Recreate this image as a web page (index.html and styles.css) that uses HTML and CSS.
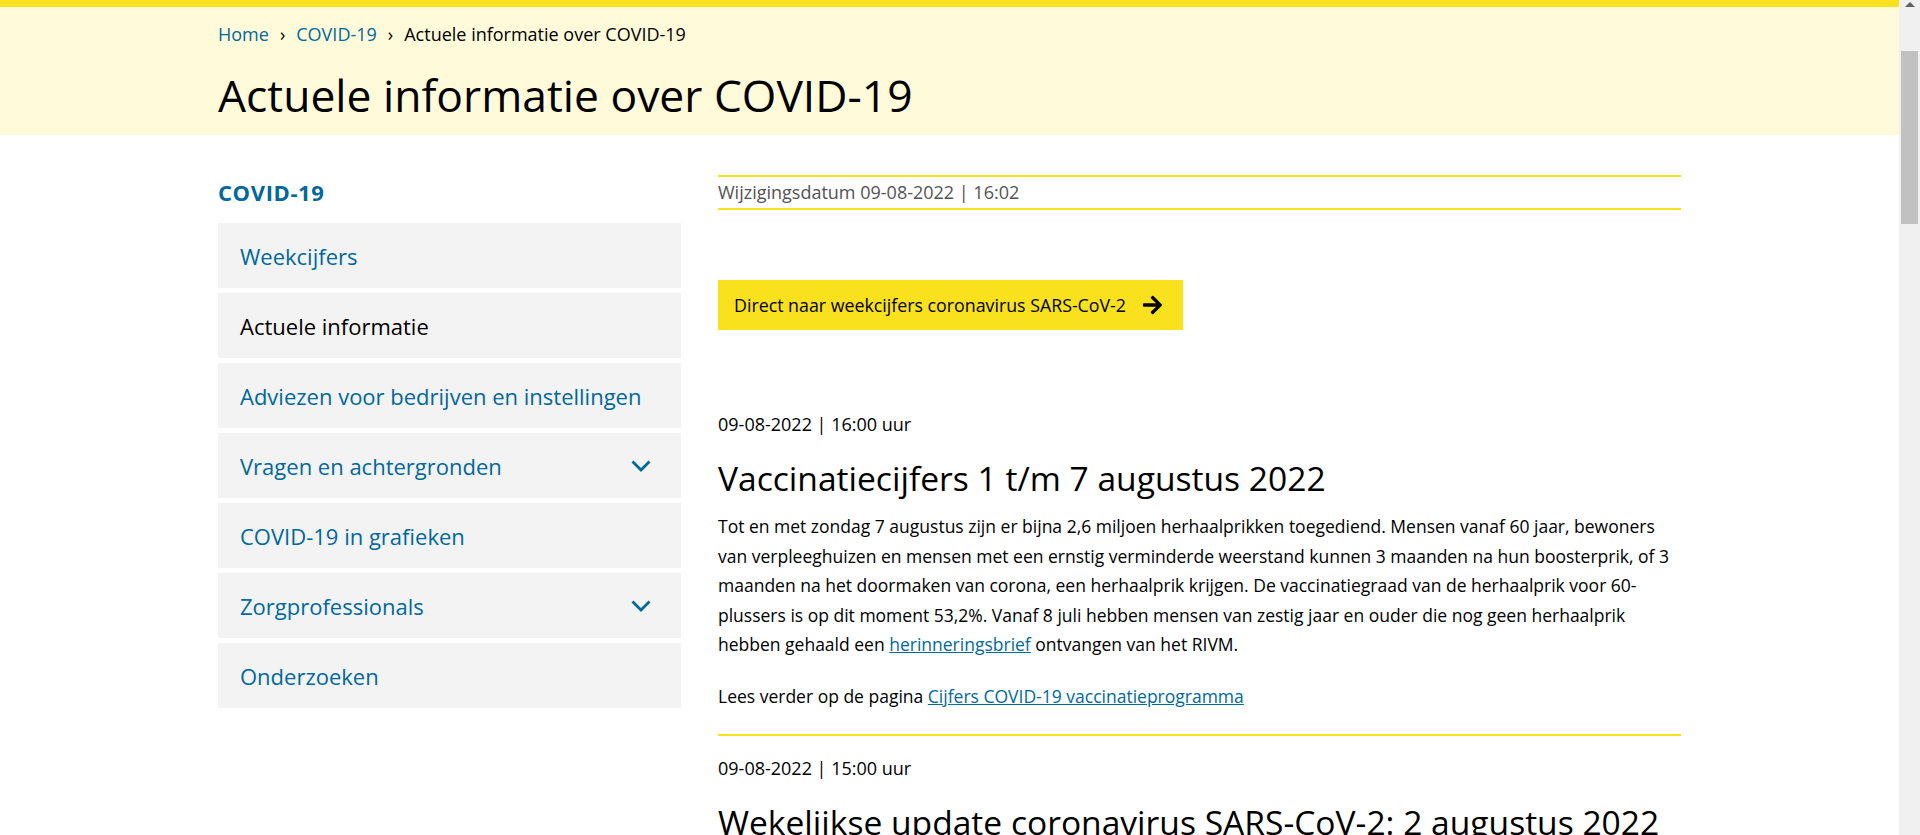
FILE: index.html
```html
<!DOCTYPE html>
<html lang="nl">
<head>
<meta charset="utf-8">
<title>Actuele informatie over COVID-19 | Rijksoverheid.nl</title>
<link rel="stylesheet" href="styles.css">
</head>
<body>
<div class="viewport">
  <header class="page-header">
    <div class="container">
      <nav class="breadcrumb" aria-label="Kruimelpad">
        <a href="#">Home</a><span class="sep">›</span><a href="#">COVID-19</a><span class="sep">›</span><span class="current">Actuele informatie over COVID-19</span>
      </nav>
      <h1 class="page-title">Actuele informatie over COVID-19</h1>
    </div>
  </header>

  <div class="container layout">
    <aside class="sidebar">
      <h2 class="side-title">COVID-19</h2>
      <ul class="side-nav">
        <li><a href="#" class="side-link">Weekcijfers</a></li>
        <li><span class="side-link active">Actuele informatie</span></li>
        <li><a href="#" class="side-link">Adviezen voor bedrijven en instellingen</a></li>
        <li><a href="#" class="side-link">Vragen en achtergronden<svg class="chev" viewBox="0 0 20 12" width="20" height="12"><polyline points="1.5,1.5 10,10 18.5,1.5" fill="none" stroke="#01689b" stroke-width="2.8"/></svg></a></li>
        <li><a href="#" class="side-link">COVID-19 in grafieken</a></li>
        <li><a href="#" class="side-link">Zorgprofessionals<svg class="chev" viewBox="0 0 20 12" width="20" height="12"><polyline points="1.5,1.5 10,10 18.5,1.5" fill="none" stroke="#01689b" stroke-width="2.8"/></svg></a></li>
        <li><a href="#" class="side-link">Onderzoeken</a></li>
      </ul>
    </aside>

    <main class="content">
      <p class="meta">Wijzigingsdatum 09-08-2022 | 16:02</p>

      <a href="#" class="cta">Direct naar weekcijfers coronavirus SARS-CoV-2
        <svg class="cta-arrow" viewBox="0 0 448 512" width="19" height="22"><path d="M190.5 66.9l22.2-22.2c9.4-9.4 24.6-9.4 33.9 0L441 239c9.4 9.4 9.4 24.6 0 33.9L246.6 467.3c-9.4 9.4-24.6 9.4-33.9 0l-22.2-22.2c-9.5-9.5-9.3-25 .4-34.3L311.4 296H24c-13.3 0-24-10.7-24-24v-32c0-13.3 10.7-24 24-24h287.4L190.9 101.2c-9.8-9.3-10-24.8-.4-34.3z" fill="#000"/></svg>
      </a>

      <article class="news first">
        <p class="news-date">09-08-2022 | 16:00 uur</p>
        <h2 class="news-title">Vaccinatiecijfers 1 t/m 7 augustus 2022</h2>
        <p class="news-body">Tot en met zondag 7 augustus zijn er bijna 2,6 miljoen herhaalprikken toegediend. Mensen vanaf 60 jaar, bewoners<br>van verpleeghuizen en mensen met een ernstig verminderde weerstand kunnen 3 maanden na hun boosterprik, of 3<br>maanden na het doormaken van corona, een herhaalprik krijgen. De vaccinatiegraad van de herhaalprik voor 60-<br>plussers is op dit moment 53,2%. Vanaf 8 juli hebben mensen van zestig jaar en ouder die nog geen herhaalprik<br>hebben gehaald een <a href="#">herinneringsbrief</a> ontvangen van het RIVM.</p>
        <p class="news-more">Lees verder op de pagina <a href="#">Cijfers COVID-19 vaccinatieprogramma</a></p>
      </article>

      <article class="news">
        <p class="news-date">09-08-2022 | 15:00 uur</p>
        <h2 class="news-title">Wekelijkse update coronavirus SARS-CoV-2: 2 augustus 2022</h2>
        <p class="news-body">Het aantal positief geteste mensen is de afgelopen week verder gedaald. Ook het aantal nieuwe<br>ziekenhuisopnames en opnames op de intensive care is afgenomen ten opzichte van de week ervoor.</p>
        <p class="news-more">Lees verder op de pagina <a href="#">Weekcijfers</a></p>
      </article>
    </main>
  </div>
</div>
<div class="scrollbar" aria-hidden="true">
  <span class="sb-arrow"></span>
  <span class="sb-thumb"></span>
</div>
</body>
</html>
```

FILE: styles.css
```css
html,
body {
  height: 100%;
}

body {
  margin: 0;
  display: flex;
  overflow: hidden;
  font-family: "Open Sans", "Noto Sans", sans-serif;
  color: #000;
  background: #fff;
}

a {
  color: #01689b;
}

.viewport {
  flex: 1;
  min-width: 0;
  overflow: hidden;
}

.scrollbar {
  flex: none;
  width: 21px;
  background: #f0f0f0;
  display: flex;
  flex-direction: column;
  align-items: center;
}

.sb-arrow {
  margin-top: 2px;
  width: 0;
  height: 0;
  border-left: 5px solid transparent;
  border-right: 5px solid transparent;
  border-bottom: 5px solid #606060;
}

.sb-thumb {
  margin-top: 44px;
  width: 17px;
  height: 173px;
  background: #c1c1c1;
}

.container {
  width: 1463px;
  margin: 0 auto;
}

.page-header {
  background: #fffbda;
  border-top: 7px solid #f9e11e;
  padding: 15px 0 12px;
}

.breadcrumb {
  font-size: 18px;
  line-height: 24px;
}

.breadcrumb a {
  text-decoration: none;
}

.breadcrumb .sep {
  margin: 0 11px;
  color: #000;
}

.breadcrumb .current {
  color: #000;
}

.page-title {
  margin: 21px 0 0;
  font-size: 44.4px;
  line-height: 56px;
  font-weight: 400;
}

.layout {
  display: flex;
  gap: 37px;
  align-items: flex-start;
}

.sidebar {
  width: 463px;
  flex: none;
  padding-top: 42px;
}

.side-title {
  margin: 0 0 16px;
  font-size: 22px;
  line-height: 30px;
  font-weight: 700;
  color: #01689b;
  letter-spacing: 0.6px;
}

.side-nav {
  list-style: none;
  margin: 0;
  padding: 0;
  display: flex;
  flex-direction: column;
  gap: 5px;
}

.side-link {
  display: flex;
  align-items: center;
  justify-content: space-between;
  height: 65px;
  padding: 0 30px 0 22px;
  background: #f3f3f3;
  font-size: 22px;
  color: #01689b;
  text-decoration: none;
}

.side-link.active {
  color: #000;
}

.chev {
  flex: none;
}

.content {
  width: 963px;
  flex: none;
  padding-top: 40px;
}

.meta {
  margin: 0;
  border-top: 2px solid #f9e11e;
  border-bottom: 2px solid #f9e11e;
  padding: 2px 0 3px;
  font-size: 18px;
  line-height: 26px;
  color: #535353;
}

.cta {
  display: inline-flex;
  align-items: center;
  gap: 17px;
  margin-top: 70px;
  height: 50px;
  box-sizing: border-box;
  padding: 0 21px 0 16px;
  background: #f9e11e;
  color: #000;
  font-size: 17.8px;
  text-decoration: none;
}

.news {
  padding: 18px 0 22px;
  border-top: 2px solid #f9e11e;
}

.news.first {
  border-top: 0;
  padding-top: 80px;
}

.news-date {
  margin: 0;
  font-size: 18px;
  line-height: 29.4px;
}

.news-title {
  margin: 18px 0 13px;
  font-size: 33.6px;
  line-height: 42px;
  font-weight: 400;
}

.news-body {
  margin: 0 -40px 0 0;
  font-size: 17.5px;
  line-height: 29.4px;
}

.news-more {
  margin: 23px 0 0;
  font-size: 17.5px;
  line-height: 29.4px;
}
```
